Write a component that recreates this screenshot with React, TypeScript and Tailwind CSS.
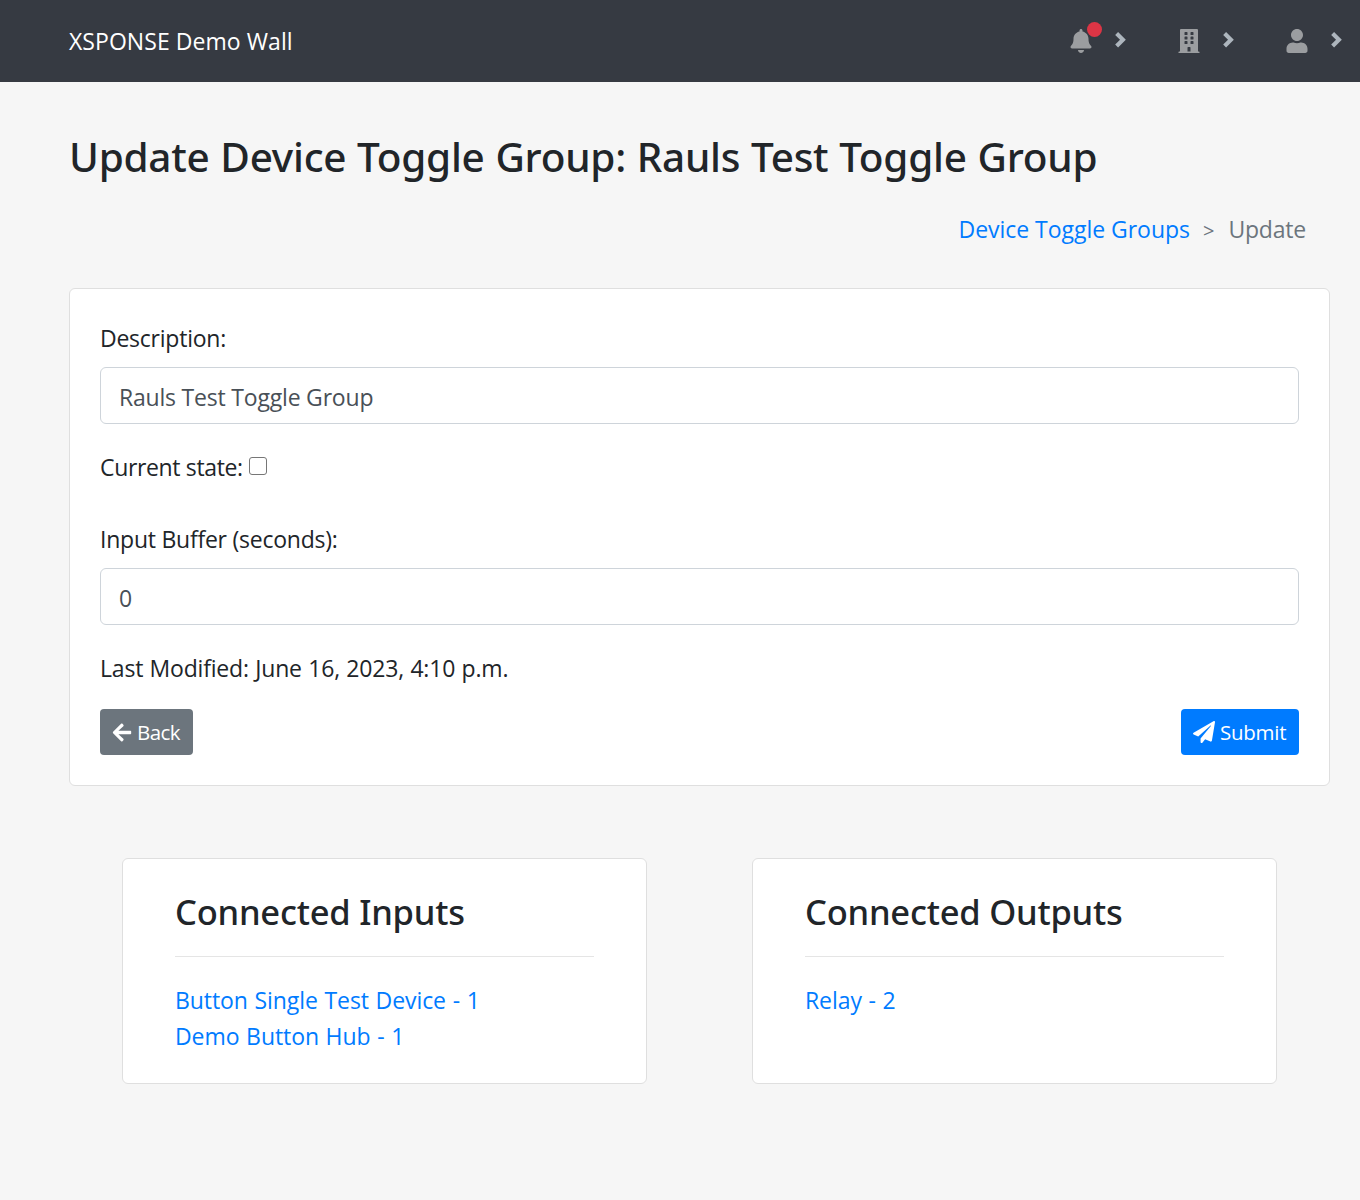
import { FaArrowLeft, FaBell, FaBuilding, FaPaperPlane, FaUser } from "react-icons/fa";
import type { ReactNode } from "react";

function NavItem({ children }: { children: ReactNode }) {
  return (
    <div className="relative flex items-center gap-[22.5px] text-[#9b9da0]">
      {children}
      <svg viewBox="1.25 0 5.5 8" className="mb-[2px] h-[15.5px] w-[11px] fill-[#adb5bd]">
        <path d="M2.75 0l-1.5 1.5 2.5 2.5-2.5 2.5 1.5 1.5 4-4-4-4z" />
      </svg>
    </div>
  );
}

function Field({ label, value }: { label: string; value: string }) {
  return (
    <label className="block">
      <span className="block h-9 leading-9 tracking-[-0.24px]">{label}</span>
      <input
        defaultValue={value}
        className="mt-[11px] block h-[57px] w-full rounded-[6px] border border-[#ced4da] bg-white px-[18px] pt-[3px] tracking-[-0.2px] text-[#495057] outline-none"
      />
    </label>
  );
}

function LinkCard({ title, links }: { title: string; links: string[] }) {
  return (
    <section className="h-[226px] w-[525px] rounded-[6px] border border-[#dfdfdf] bg-white px-[52px] pt-[31px]">
      <h2 className="h-[44px] font-['Noto_Sans',sans-serif] text-[34.5px] leading-[44px] font-medium tracking-[-0.22px] whitespace-nowrap">
        {title}
      </h2>
      <hr className="mt-[22px] mb-[25px] border-[#e5e5e5]" />
      {links.map((link) => (
        <a key={link} href="#" className="block h-9 leading-9 tracking-[-0.08px] text-[#007bff] [word-spacing:0.8px]">
          {link}
        </a>
      ))}
    </section>
  );
}

export default function App() {
  return (
    <div className="min-h-[1200px] w-[1360px] bg-[#f6f6f6] font-['Open_Sans',sans-serif] text-[23px] text-[#212529]">
      <header className="flex h-[82px] items-center justify-between bg-[#363a42] pr-[18.5px] pl-[69px]">
        <span className="tracking-[0.06px] text-white">XSPONSE Demo Wall</span>
        <nav className="flex gap-[52.5px]">
          <NavItem>
            <FaBell className="h-6 w-[22px]" />
            <span className="absolute -top-[7px] left-[17px] size-[15px] rounded-full bg-[#dc3545]" />
          </NavItem>
          <NavItem>
            <FaBuilding className="h-6 w-[22px]" />
          </NavItem>
          <NavItem>
            <FaUser className="h-6 w-[22px]" />
          </NavItem>
        </nav>
      </header>

      <main className="pr-[30px] pl-[69px]">
        <h1 className="pt-[49px] font-['Noto_Sans',sans-serif] text-[40.5px] leading-[52px] font-medium tracking-[-0.25px] whitespace-nowrap [word-spacing:0.5px]">
          Update Device Toggle Group: Rauls Test Toggle Group
        </h1>

        <div className="mt-[28px] flex h-9 justify-end pr-6 leading-9 text-[#6c757d]">
          <a href="#" className="tracking-[-0.03px] text-[#007bff]">Device Toggle Groups</a>
          <span className="mr-[14px] ml-[13px] pt-[2px] text-[20px]">&gt;</span>
          <span className="tracking-[-0.2px]">Update</span>
        </div>

        <form className="mt-[41px] h-[498px] rounded-[6px] border border-[#dfdfdf] bg-white px-[30px] pt-[31px]">
          <Field label="Description:" value="Rauls Test Toggle Group" />
          <label className="mt-[25px] mb-9 flex h-9 items-center">
            <span className="tracking-[-0.35px]">Current state:</span>
            <input
              type="checkbox"
              className="mb-[2px] ml-[6px] size-[18px] appearance-none rounded-[3px] border-[1.5px] border-[#767676] bg-white"
            />
          </label>
          <Field label="Input Buffer (seconds):" value="0" />
          <p className="mt-[25px] h-9 leading-9 tracking-[-0.2px] [word-spacing:0.7px]">Last Modified: June 16, 2023, 4:10 p.m.</p>
          <div className="mt-[23px] flex justify-between text-[20.5px] text-white">
            <button type="button" className="flex h-[46px] w-[93px] items-center gap-[5px] rounded-[4px] bg-[#6c757d] pl-3 tracking-[-0.6px]">
              <FaArrowLeft className="h-[21px] w-5" />
              Back
            </button>
            <button type="submit" className="flex h-[46px] w-[118px] items-center gap-[5px] rounded-[4px] bg-[#007bff] pl-3 tracking-[-0.25px]">
              <FaPaperPlane className="size-[22px]" />
              Submit
            </button>
          </div>
        </form>

        <div className="mt-[72px] flex gap-[105px] pl-[53px]">
          <LinkCard title="Connected Inputs" links={["Button Single Test Device - 1", "Demo Button Hub - 1"]} />
          <LinkCard title="Connected Outputs" links={["Relay - 2"]} />
        </div>
      </main>
    </div>
  );
}
